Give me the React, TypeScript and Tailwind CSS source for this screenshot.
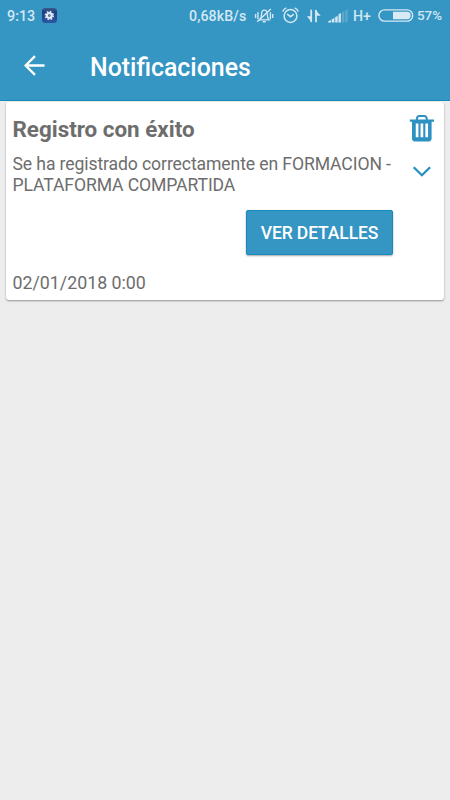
function SettingsBadge() {
  return (
    <svg className="ml-[6px] h-[15px] w-[15px]" viewBox="0 0 15 15">
      <defs>
        <linearGradient id="badge" x1="0" y1="0" x2="0" y2="1">
          <stop offset="0" stopColor="#3d5a8c" />
          <stop offset="0.3" stopColor="#203f83" />
          <stop offset="1" stopColor="#2c56a2" />
        </linearGradient>
      </defs>
      <rect width="15" height="15" rx="3.2" fill="url(#badge)" />
      <circle cx="7.3" cy="7.5" r="3.9" fill="none" stroke="#d9e6f2" strokeWidth="1.6" strokeDasharray="1.7 1.363" />
      <circle cx="7.3" cy="7.5" r="2.4" fill="none" stroke="#e2edf6" strokeWidth="2.2" />
      <circle cx="7.3" cy="7.5" r="0.9" fill="#7890bd" />
    </svg>
  );
}

function StatusIcons() {
  return (
    <svg className="h-[20px] w-[94px] shrink-0" viewBox="254 6 94 20" fill="none" stroke="#d3e8f3">
      {/* Vibrate / bell off */}
      <path d="M255.6 14v4M257.9 12.3v7M270.4 12.3v7M272.7 14v4" strokeWidth="1.4" />
      <path d="M259.8 19.9c1.5-1.3 1.7-2.9 1.7-5.3 0-2.6 1-4.4 2.9-4.4s2.9 1.8 2.9 4.4c0 2.4.2 4 1.7 5.3z" strokeWidth="1.3" />
      <path d="M262.7 21.8h3M257.2 21.7l13.6-12.7" strokeWidth="1.5" />
      {/* Alarm clock */}
      <circle cx="290.5" cy="16" r="6.4" strokeWidth="1.5" />
      <path d="M282.8 11.6c.4-1.8 1.8-3.1 3.6-3.7M298.2 11.6c-.4-1.8-1.8-3.1-3.6-3.7" strokeWidth="1.5" />
      <path d="M287.2 14.2l3.3 2.5 3.3-2.5" strokeWidth="1.5" />
      {/* Data arrows */}
      <path d="M311.2 9.7v12.2" strokeWidth="1.8" />
      <path d="M316 22.3V10" strokeWidth="1.8" />
      <path d="M312 22.4l-5.2-6.2h4.9zM315.2 9.5l5.5 6.2h-5.5z" fill="#d3e8f3" stroke="none" />
      {/* Signal bars */}
      <g fill="#d3e8f3" stroke="none">
        <path d="M328 21.6l3-1.6v2.6h-3zM331.7 19.4l2.7-1.7v4.9h-2.7zM335.2 17l2.5-1v6.6h-2.5zM338.5 14.3l2.4-1.2v9.5h-2.4z" />
        <path d="M341.9 12.2l2.4-1v11.4h-2.4zM345.3 10.4l2.3-.9v13.1h-2.3z" opacity="0.25" />
      </g>
    </svg>
  );
}

function StatusBar() {
  return (
    <div className="flex h-[31px] items-center pl-[7px] font-medium text-[#d3e8f3]">
      <span className="w-[29px] pt-[2px] text-[14.3px]">9:13</span>
      <SettingsBadge />
      <span className="ml-[132px] w-[65px] pt-[2px] text-[14.2px] whitespace-nowrap tracking-[0.1px]">0,68kB/s</span>
      <StatusIcons />
      <span className="ml-[5px] w-[25px] pt-[2px] text-[14.2px]">H+</span>
      <svg className="h-[13px] w-[36px] shrink-0" viewBox="0 0 36 13">
        <rect x="0.9" y="0.9" width="33.8" height="11.2" rx="5.6" fill="none" stroke="#d3e8f3" strokeWidth="1.4" />
        <path d="M15 2.8h14a3.7 3.7 0 0 1 0 7.4H15z" fill="#d8ebf4" />
      </svg>
      <span className="ml-[3px] pt-[2px] text-[13.4px]">57%</span>
    </div>
  );
}

function NotificationCard() {
  return (
    <article className="mx-[6px] mt-px flex h-[198px] rounded-[3px] bg-white pl-[6.5px] text-[#6d6d6d] shadow-[0_1px_2px_rgba(0,0,0,0.38)]">
      <div className="flex w-[387.5px] flex-col">
        <h2 className="mt-[14px] text-[22.4px] leading-[27px] font-bold">Registro con éxito</h2>
        <p className="mt-[11px] text-[17.6px] leading-[21px] tracking-[-0.11px]">
          Se ha registrado correctamente en FORMACION - PLATAFORMA COMPARTIDA
        </p>
        <button className="mt-[14px] mr-[7px] h-[45px] w-[147px] self-end rounded-[2px] border border-[#158bbd] bg-[#3595c3] pt-[2px] text-[17.5px] font-medium tracking-[-0.12px] text-white shadow-[0_1px_2px_rgba(0,0,0,0.35)]">
          VER DETALLES
        </button>
        <time className="mt-[17px] text-[17.8px] leading-[21px]">02/01/2018 0:00</time>
      </div>
      <div className="flex flex-col items-center pl-[9px]">
        <svg className="mt-[12px] h-[28px] w-[26px]" viewBox="0 0 26 28" fill="none" stroke="#2d91c1">
          <path d="M7.8 6.2V5c.2-1.8 1-2.9 2.6-2.9h4.8c1.6 0 2.4 1.1 2.6 2.9v1.2" strokeWidth="2" />
          <path d="M.8 5.6h24.2v2.1h-2.4v16.8c0 1.8-1 2.9-2.8 2.9H5.8c-1.8 0-2.8-1.1-2.8-2.9V7.7H.8z" fill="#2d91c1" stroke="none" />
          <path d="M8.1 9.4v13.8M12.9 9.4v13.8M17.7 9.4v13.8" stroke="white" strokeWidth="2.7" />
        </svg>
        <svg className="mt-[24px] h-[12px] w-[20px]" viewBox="0 0 20 12" fill="none" stroke="#2490c1" strokeWidth="2.3">
          <path d="M1.7 1.2 9.9 9.2l8.2-8" />
        </svg>
      </div>
    </article>
  );
}

export default function App() {
  return (
    <main className="h-[800px] w-[450px] overflow-hidden bg-[#ededed] font-[Roboto,sans-serif]">
      <header className="h-[101px] border-b border-[#128bbd] bg-[#3595c3]">
        <StatusBar />
        <div className="flex h-[70px] items-center">
          <svg className="ml-[24px] h-[22px] w-[22px]" viewBox="0 0 22 22" fill="none" stroke="white" strokeWidth="2.3">
            <path d="M20.5 10.5H1.8M11 1.1 1.6 10.5l9.4 9.4" />
          </svg>
          <h1 className="mt-[4px] ml-[44px] text-[24.9px] leading-[30px] font-medium text-white">Notificaciones</h1>
        </div>
      </header>
      <NotificationCard />
    </main>
  );
}
